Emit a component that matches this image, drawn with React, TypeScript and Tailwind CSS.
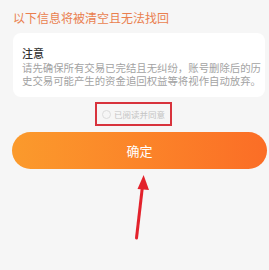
import React, { useState } from 'react';

const App: React.FC = () => {
    const [agreed, setAgreed] = useState(false);

    return (
        <div className="relative w-[269px] h-[270px] overflow-hidden bg-[#f6f6f6] font-['Noto_Sans_CJK_SC',sans-serif]">
            <div className="pl-[13px] pt-[9px] text-[12px] leading-[17px] text-[#ea7f4f]">
                以下信息将被清空且无法找回
            </div>

            <div className="ml-[13px] mr-[4px] mt-[7px] rounded-lg bg-white pl-[9px] pr-[4px] pt-[13px] pb-[10px]">
                <div className="text-[11px] leading-[14px] font-medium text-[#333]">注意</div>
                <p className="mt-[1px] text-[10.4px] leading-[13px] text-[#a3a3a3]">
                    请先确保所有交易已完结且无纠纷，账号删除后的历史交易可能产生的资金追回权益等将视作自动放弃。
                </p>
            </div>

            <div className="mt-[5px] flex justify-center pr-[2px]">
                <button
                    type="button"
                    onClick={() => setAgreed(!agreed)}
                    className="flex h-[24px] w-[77px] items-center justify-center gap-[3px] border-2 border-[#d8333d]"
                >
                    <span
                        className={`h-[9px] w-[9px] rounded-full border ${agreed ? 'border-[#f07a2a] bg-[#f07a2a]' : 'border-[#dcdcdc]'}`}
                    />
                    <span className="text-[8.5px] leading-[10px] text-[#c4c4c4]">已阅读并同意</span>
                </button>
            </div>

            <div className="ml-[12px] mr-[2px] mt-[6px]">
                <button
                    type="button"
                    className="flex h-[37px] w-full items-center justify-center rounded-full bg-gradient-to-r from-[#fb9a2c] to-[#fb6d26] text-[13px] text-white"
                >
                    确定
                </button>
            </div>

            <svg
                className="absolute left-0 top-0 pointer-events-none"
                width="269"
                height="270"
                viewBox="0 0 269 270"
            >
                <line x1="136.5" y1="238" x2="142.5" y2="186" stroke="#e3222c" strokeWidth="3" strokeLinecap="round" />
                <polygon points="143.6,175 149,190 137.5,189" fill="#e3222c" />
            </svg>
        </div>
    );
};

export default App;
